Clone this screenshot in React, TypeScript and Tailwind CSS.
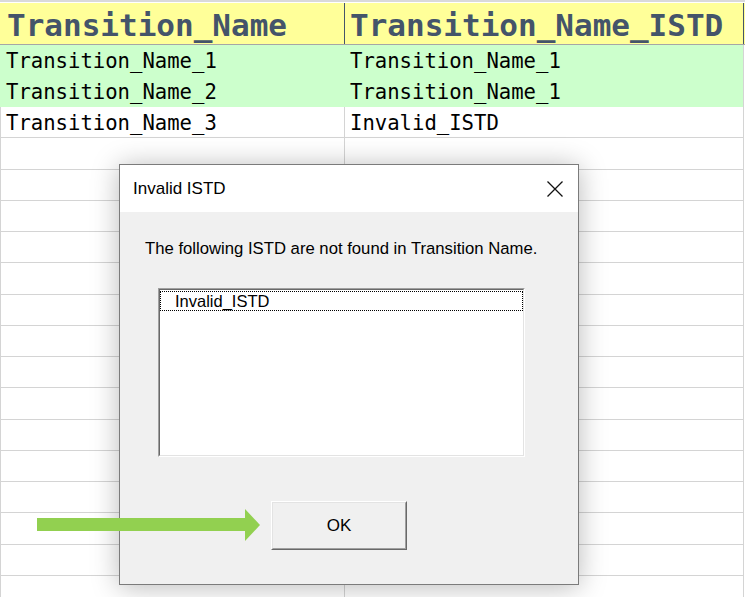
type Row = { a: string; b: string; matched: boolean };

const rows: Row[] = [
  { a: "Transition_Name_1", b: "Transition_Name_1", matched: true },
  { a: "Transition_Name_2", b: "Transition_Name_1", matched: true },
  { a: "Transition_Name_3", b: "Invalid_ISTD", matched: false },
];

const emptyRows = Array.from({ length: 15 }, (_, i) => i);

export default function App() {
  const matched = rows.filter((r) => r.matched);
  const others = rows.filter((r) => !r.matched);

  return (
    <div className="relative h-[597px] w-[745px] overflow-hidden bg-white">
      {/* sheet */}
      <div className="flex flex-col font-['DejaVu_Sans_Mono',monospace]">
        <div className="h-[3px] border-t-2 border-[#d9d9d9]" />

        <div className="flex h-[42px] border-b border-[#a6a6a6] bg-[#ffff99] text-[31px] font-bold text-[#44546a]">
          <div className="flex w-[345px] items-center border-r border-[#44546a] pl-[7px] pt-[3px]">
            Transition_Name
          </div>
          <div className="flex w-[399px] items-center border-r border-[#44546a] pl-[5px] pt-[3px]">
            Transition_Name_ISTD
          </div>
        </div>

        <div className="flex w-[744px] flex-col border-r border-[#d4d4d4] bg-[#ccffcc] text-[20.6px] text-black">
          {matched.map((r) => (
            <div key={r.a} className="flex h-[31px] items-center pt-[2px]">
              <div className="w-[345px] pl-[6px]">{r.a}</div>
              <div className="w-[398px] pl-[5px]">{r.b}</div>
            </div>
          ))}
        </div>

        {others.map((r) => (
          <div
            key={r.a}
            className="flex h-[31.25px] border-l border-[#d4d4d4] text-[20.6px] text-black"
          >
            <div className="flex w-[344px] items-center border-b border-r border-[#d4d4d4] pl-[5px] pt-[2px]">
              {r.a}
            </div>
            <div className="flex w-[399px] items-center border-b border-r border-[#d4d4d4] pl-[5px] pt-[2px]">
              {r.b}
            </div>
          </div>
        ))}

        {emptyRows.map((i) => (
          <div key={i} className="flex h-[31.25px] border-l border-[#d4d4d4]">
            <div className="w-[344px] border-b border-r border-[#d4d4d4]" />
            <div className="w-[399px] border-b border-r border-[#d4d4d4]" />
          </div>
        ))}
      </div>

      {/* message box */}
      <div className="absolute left-[119px] top-[164px] flex h-[421px] w-[460px] flex-col border border-[#7b7b7b] bg-[#f0f0f0] font-['Liberation_Sans',Arial,sans-serif] text-black shadow-[0_2px_26px_rgba(0,0,0,0.28)]">
        <div className="flex h-[47px] items-center justify-between bg-white pl-[13px] pr-[15px]">
          <span className="text-[17px]">Invalid ISTD</span>
          <svg width="16" height="16" viewBox="0 0 16 16" className="mt-[1px]">
            <path
              d="M0.5 0.5 L15.5 15.5 M15.5 0.5 L0.5 15.5"
              stroke="#111"
              strokeWidth="1.3"
              fill="none"
            />
          </svg>
        </div>

        <div className="flex flex-col">
          <p className="pl-[25px] pt-[27px] text-[16.7px] leading-[20px]">
            The following ISTD are not found in Transition Name.
          </p>

          <div className="ml-[38px] mt-[29px] h-[169px] w-[367px] border border-b-white border-l-[#a0a0a0] border-r-white border-t-[#a0a0a0]">
            <div className="h-full w-full border border-b-[#e3e3e3] border-l-[#696969] border-r-[#e3e3e3] border-t-[#696969] bg-white pt-[1px]">
              <div className="flex h-[20px] items-center border border-dotted border-black pl-[14px] text-[16.5px]">
                Invalid_ISTD
              </div>
            </div>
          </div>

          <button className="ml-[151px] mt-[44px] h-[49px] w-[136px] border border-b-[#696969] border-l-white border-r-[#696969] border-t-white bg-[#f0f0f0]">
            <div className="flex h-full w-full items-center justify-center border border-b-[#a0a0a0] border-l-[#e3e3e3] border-r-[#a0a0a0] border-t-[#e3e3e3] text-[17px]">
              OK
            </div>
          </button>
        </div>
      </div>

      {/* pointer arrow */}
      <svg
        className="absolute left-[37px] top-[509px]"
        width="224"
        height="33"
        viewBox="0 0 224 33"
      >
        <rect x="0" y="9" width="209" height="13" fill="#92d050" />
        <polygon points="208,0 223,16 208,32" fill="#92d050" />
      </svg>
    </div>
  );
}
